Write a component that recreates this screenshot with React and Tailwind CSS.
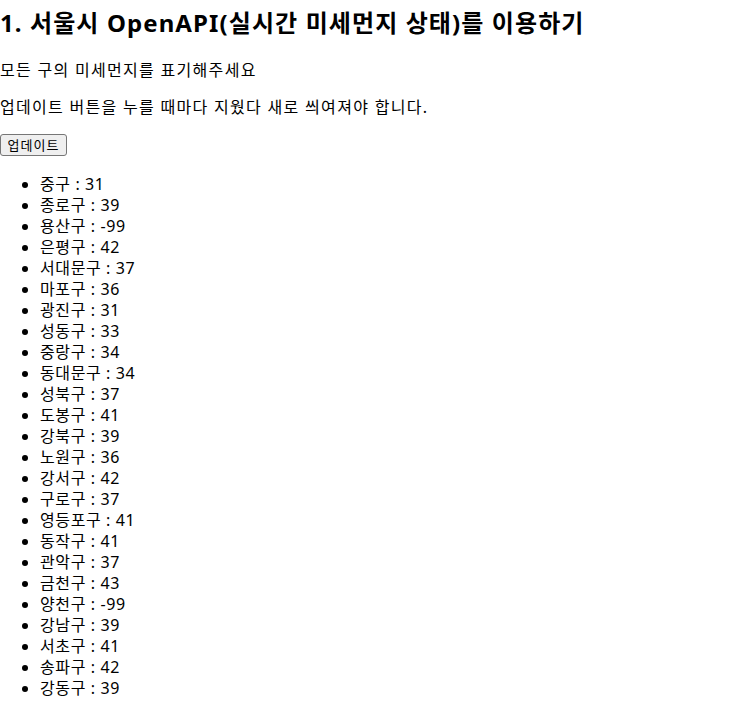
import React from "react";

const data = [
  ["중구", 31], ["종로구", 39], ["용산구", -99], ["은평구", 42], ["서대문구", 37],
  ["마포구", 36], ["광진구", 31], ["성동구", 33], ["중랑구", 34], ["동대문구", 34],
  ["성북구", 37], ["도봉구", 41], ["강북구", 39], ["노원구", 36], ["강서구", 42],
  ["구로구", 37], ["영등포구", 41], ["동작구", 41], ["관악구", 37], ["금천구", 43],
  ["양천구", -99], ["강남구", 39], ["서초구", 41], ["송파구", 42], ["강동구", 39],
];

export default function App() {
  return (
    <div className="bg-white text-black min-h-[720px] font-['Noto_Sans','Noto_Sans_CJK_KR',sans-serif]">
      <h1 className="text-[24px] font-bold leading-[32px] pt-[7px] mb-[21px] tracking-[1.1px]">1. 서울시 OpenAPI(실시간 미세먼지 상태)를 이용하기</h1>
      <p className="text-[16px] leading-[21px] mb-[16px] tracking-[1.3px]">모든 구의 미세먼지를 표기해주세요</p>
      <p className="text-[16px] leading-[21px] mb-[16px] tracking-[1.3px]">업데이트 버튼을 누를 때마다 지웠다 새로 씌여져야 합니다.</p>
      <button className="block w-[67px] h-[22px] text-[13px] leading-[16px] tracking-[1px] bg-[#efefef] border border-[#767676] rounded-[3px] mt-[0px]">업데이트</button>
      <ul className="list-disc pl-[40px] mt-[18px] text-[16px] leading-[21px] tracking-[0.6px]">
        {data.map(([n, v]) => (
          <li key={n}>{n} : {v}</li>
        ))}
      </ul>
    </div>
  );
}
